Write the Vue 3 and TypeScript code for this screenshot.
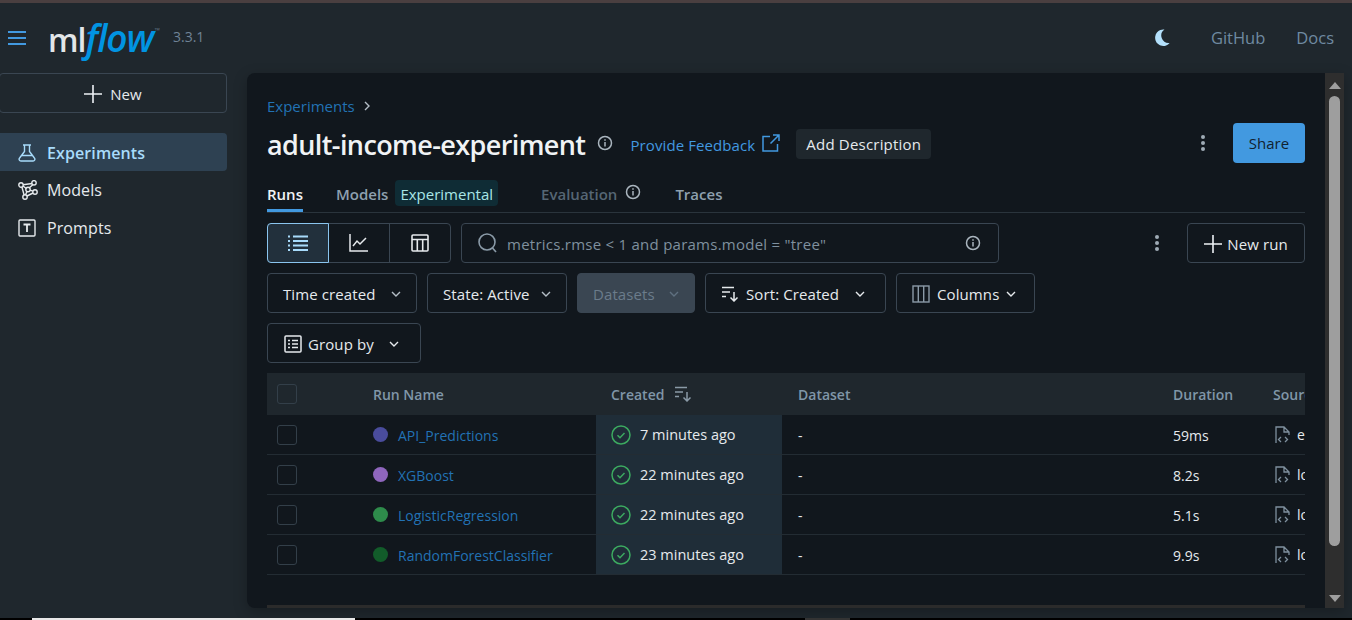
<script setup lang="ts">
interface Run {
  name: string
  color: string
  created: string
  duration: string
  source: string
}

const runs: Run[] = [
  { name: 'API_Predictions', color: '#4a4c9c', created: '7 minutes ago', duration: '59ms', source: 'e' },
  { name: 'XGBoost', color: '#8f66bd', created: '22 minutes ago', duration: '8.2s', source: 'lo' },
  { name: 'LogisticRegression', color: '#2e8b4b', created: '22 minutes ago', duration: '5.1s', source: 'lo' },
  { name: 'RandomForestClassifier', color: '#125c2a', created: '23 minutes ago', duration: '9.9s', source: 'lo' },
]
</script>

<template>
  <div class="page">
    <div class="window-strip"></div>

    <header class="topbar">
      <div class="brand">
        <svg class="burger" width="18" height="14" viewBox="0 0 18 14"><path d="M0 1h18M0 7h18M0 13h18" stroke="#4299e0" stroke-width="2" /></svg>
        <span class="logo"><span class="logo-ml">ml</span><span class="logo-flow">flow</span><span class="logo-tm">™</span></span>
        <span class="version">3.3.1</span>
      </div>
      <div class="top-links">
        <svg width="16" height="17" viewBox="0 0 16 17"><path d="M10.5 .6A8.2 8.2 0 1 0 15.6 14 A7.4 7.4 0 0 1 10.5 .6Z" fill="#b3e0fb" /></svg>
        <span class="top-link github">GitHub</span>
        <span class="top-link">Docs</span>
      </div>
    </header>

    <div class="workspace">
      <aside class="sidebar">
        <button class="new-btn">
          <svg width="18" height="18" viewBox="0 0 18 18"><path d="M9 0v18M0 9h18" stroke="#eef2f5" stroke-width="1.6" /></svg>
          New
        </button>
        <nav class="nav">
          <div class="nav-item active">
            <svg width="18" height="18" viewBox="0 0 18 18" fill="none" stroke="#a8dbfb" stroke-width="1.4"><path d="M5 1h8M6.5 1v6.5L1.6 14a1.8 1.8 0 0 0 1.4 3h12a1.8 1.8 0 0 0 1.4-3l-4.9-6.5V1M4 11.5h10" /></svg>
            <span>Experiments</span>
          </div>
          <div class="nav-item">
            <svg width="20" height="20" viewBox="0 0 20 20" fill="none" stroke="#e6eaed" stroke-width="1.4"><circle cx="3" cy="5" r="2.2" /><circle cx="16" cy="2.8" r="2.2" /><circle cx="10" cy="9.5" r="2.2" /><circle cx="17" cy="12" r="2.2" /><circle cx="7" cy="17" r="2.2" /><path d="M5 6l3.300 2.500M14.100 3.500L5.200 4.700M14.800 4.700L11.300 7.800M12.100 10.200l2.800 1M15 13l-6 3M9 11.500L7.500 14.800M3.900 7l2.200 8" /></svg>
            <span>Models</span>
          </div>
          <div class="nav-item">
            <svg width="18" height="18" viewBox="0 0 18 18" fill="none" stroke="#e6eaed" stroke-width="1.4"><rect x="1" y="1" width="16" height="16" rx="1" /><path d="M5.500 5.500h7M9 5.500v7.500" stroke-width="1.800" /></svg>
            <span>Prompts</span>
          </div>
        </nav>
      </aside>

      <main class="panel">
        <div class="content">
          <div class="crumb">
            <span>Experiments</span>
            <svg width="8" height="10" viewBox="0 0 8 10" fill="none"><path d="M2 1l4 4-4 4" stroke="#b4bec6" stroke-width="1.400" /></svg>
          </div>

          <div class="title-row">
            <h1>adult-income-experiment</h1>
            <svg class="info" width="16" height="16" viewBox="0 0 16 16" fill="none" stroke="#aab5be" stroke-width="1.500"><circle cx="8" cy="8" r="6.500" /><path d="M8 7v4.500M8 4.300v1.500" /></svg>
            <span class="feedback">Provide Feedback</span>
            <svg class="ext" width="18" height="18" viewBox="0 0 18 18" fill="none" stroke="#4299e0" stroke-width="1.500"><path d="M8 2.500H1v14.500h14.500V10M11 1h6v6M17 1L8.500 9.500" /></svg>
            <span class="add-desc">Add Description</span>
            <span class="spacer"></span>
            <svg width="4" height="16" viewBox="0 0 4 16" fill="#9fabb5"><circle cx="2" cy="2" r="2" /><circle cx="2" cy="8" r="2" /><circle cx="2" cy="14" r="2" /></svg>
            <button class="share">Share</button>
          </div>

          <div class="tabs">
            <span class="tab current">Runs</span>
            <span class="tab models-tab">Models<span class="tag">Experimental</span></span>
            <span class="tab disabled">Evaluation
              <svg width="16" height="16" viewBox="0 0 16 16" fill="none" stroke="#aab5be" stroke-width="1.500"><circle cx="8" cy="8" r="6.500" /><path d="M8 7v4.500M8 4.300v1.500" /></svg>
            </span>
            <span class="tab traces">Traces</span>
          </div>

          <div class="toolbar">
            <div class="toggle">
              <div class="seg on">
                <svg width="22" height="16" viewBox="0 0 22 16" stroke="#a8dbfb" stroke-width="2"><path d="M1 1.500h2M6 1.500h15M1 6h2M6 6h15M1 10.500h2M6 10.500h15M1 15h2M6 15h15" /></svg>
              </div>
              <div class="seg">
                <svg width="20" height="18" viewBox="0 0 20 18" fill="none" stroke="#e6eaed" stroke-width="1.500"><path d="M1 0v17h18M4 12l4-5 3 3 6-6" /></svg>
              </div>
              <div class="seg">
                <svg width="18" height="18" viewBox="0 0 18 18" fill="none" stroke="#e6eaed" stroke-width="1.600"><rect x="1" y="1" width="16" height="16" rx="1" /><path d="M1 5.500h16M6.300 5.500V17M11.700 5.500V17" /></svg>
              </div>
            </div>
            <div class="search">
              <svg width="20" height="20" viewBox="0 0 20 20" fill="none" stroke="#8a9aa7" stroke-width="1.600"><circle cx="9" cy="9" r="8" /><path d="M14.500 15l3.500 4" /></svg>
              <span class="placeholder">metrics.rmse &lt; 1 and params.model = "tree"</span>
              <svg width="16" height="16" viewBox="0 0 16 16" fill="none" stroke="#aab5be" stroke-width="1.500"><circle cx="8" cy="8" r="6.500" /><path d="M8 7v4.500M8 4.300v1.500" /></svg>
            </div>
            <span class="spacer"></span>
            <svg width="4" height="16" viewBox="0 0 4 16" fill="#9fabb5"><circle cx="2" cy="2" r="2" /><circle cx="2" cy="8" r="2" /><circle cx="2" cy="14" r="2" /></svg>
            <button class="btn new-run">
              <svg width="18" height="18" viewBox="0 0 18 18"><path d="M9 0v18M0 9h18" stroke="#eef2f5" stroke-width="1.600" /></svg>
              New run
            </button>
          </div>

          <div class="filters">
            <button class="btn f-time">Time created
              <svg class="chev" width="10" height="6" viewBox="0 0 10 6" fill="none"><path d="M1 1l4 4 4-4" stroke="#b4bec6" stroke-width="1.400" /></svg>
            </button>
            <button class="btn f-state">State: Active
              <svg class="chev" width="10" height="6" viewBox="0 0 10 6" fill="none"><path d="M1 1l4 4 4-4" stroke="#b4bec6" stroke-width="1.400" /></svg>
            </button>
            <button class="btn f-data">Datasets
              <svg class="chev" width="10" height="6" viewBox="0 0 10 6" fill="none"><path d="M1 1l4 4 4-4" stroke="#5f7080" stroke-width="1.400" /></svg>
            </button>
            <button class="btn f-sort">
              <svg width="18" height="16" viewBox="0 0 18 16" fill="none" stroke="#e6eaed" stroke-width="1.500"><path d="M1 1.500h12M1 6h8M1 10.500h4M13 6v9M9.500 11.500l3.500 3.500 3.500-3.500" /></svg>
              Sort: Created
              <svg class="chev" width="10" height="6" viewBox="0 0 10 6" fill="none"><path d="M1 1l4 4 4-4" stroke="#e6eaed" stroke-width="1.400" /></svg>
            </button>
            <button class="btn f-cols">
              <svg width="18" height="18" viewBox="0 0 18 18" fill="none" stroke="#8a9aa7" stroke-width="1.400"><rect x="1" y="1" width="16" height="16" /><path d="M6.300 1v16M11.700 1v16" /></svg>
              Columns
              <svg class="chev" width="10" height="6" viewBox="0 0 10 6" fill="none"><path d="M1 1l4 4 4-4" stroke="#e6eaed" stroke-width="1.400" /></svg>
            </button>
            <button class="btn f-group">
              <svg width="18" height="18" viewBox="0 0 18 18" fill="none" stroke="#e6eaed" stroke-width="1.500"><rect x="1" y="1" width="16" height="16" rx="1" /><path d="M4 5.500h2M8 5.500h6M4 9h2M8 9h6M4 12.500h2M8 12.500h6" /></svg>
              Group by
              <svg class="chev" width="10" height="6" viewBox="0 0 10 6" fill="none"><path d="M1 1l4 4 4-4" stroke="#e6eaed" stroke-width="1.400" /></svg>
            </button>
          </div>

          <div class="table">
            <div class="row head">
              <div class="cell check"><span class="box"></span></div>
              <div class="cell">Run Name</div>
              <div class="cell created-head">Created
                <svg width="18" height="16" viewBox="0 0 18 16" fill="none" stroke="#8a9aa7" stroke-width="1.500"><path d="M1 1.500h12M1 6h8M1 10.500h4M13 6v9M9.500 11.500l3.500 3.500 3.500-3.500" /></svg>
              </div>
              <div class="cell">Dataset</div>
              <div class="cell">Duration</div>
              <div class="cell">Source</div>
            </div>
            <div v-for="run in runs" :key="run.name" class="row">
              <div class="cell check"><span class="box"></span></div>
              <div class="cell name">
                <span class="dot" :style="{ background: run.color }"></span>
                {{ run.name }}
              </div>
              <div class="cell created">
                <svg width="20" height="20" viewBox="0 0 20 20" fill="none" stroke="#3caa60" stroke-width="1.500"><circle cx="10" cy="10" r="9" /><path d="M6.500 10.300l2.500 2.400 4.500-4.700" /></svg>
                {{ run.created }}
              </div>
              <div class="cell plain">-</div>
              <div class="cell plain">{{ run.duration }}</div>
              <div class="cell source">
                <svg width="15" height="18" viewBox="0 0 15 18" fill="none" stroke="#7f909e" stroke-width="1.300"><path d="M1 17V1h8l5 5v3M9 1v5h5M6 11l-2.500 2.500L6 16M10 11l2.500 2.500L10 16" /></svg>
                <span>{{ run.source }}</span>
              </div>
            </div>
          </div>

          <span class="spacer"></span>
          <div class="hscroll"></div>
        </div>

        <div class="scrollbar">
          <svg width="12" height="7" viewBox="0 0 12 7"><path d="M6 0l6 7H0z" fill="#9e9e9e" /></svg>
          <div class="thumb"></div>
          <span class="spacer"></span>
          <svg width="12" height="7" viewBox="0 0 12 7"><path d="M0 0h12L6 7z" fill="#9e9e9e" /></svg>
        </div>
      </main>
    </div>

    <div class="taskbar">
      <span class="tb-white"></span>
      <span class="tb-gray"></span>
    </div>
  </div>
</template>

<style>
html,
body {
  margin: 0;
  background: #000;
  overflow: hidden;
}
</style>

<style scoped>
.page {
  width: 1352px;
  height: 620px;
  display: flex;
  flex-direction: column;
  background: #1f272d;
  font-family: "Open Sans", "Noto Sans", sans-serif;
  font-size: 14px;
  color: #e6eaed;
  overflow: hidden;
}

.window-strip {
  height: 3px;
  background: #4a3f40;
  flex: none;
}

.topbar {
  height: 70px;
  flex: none;
  display: flex;
  align-items: center;
  justify-content: space-between;
  padding: 0 18px 0 8px;
  box-sizing: border-box;
}

.brand {
  display: flex;
  align-items: center;
}

.burger {
  margin-right: 24px;
}

.logo {
  width: 123px;
  display: flex;
  align-items: baseline;
  line-height: 40px;
  margin: 2px 0 0 -2px;
  padding-right: 2px;
}

.logo-ml {
  font-size: 32px;
  font-weight: 600;
  color: #e2e6e8;
  letter-spacing: -1px;
}

.logo-flow {
  font-style: italic;
  font-size: 37px;
  font-weight: 600;
  color: #0194e2;
  letter-spacing: -1px;
}

.logo-tm {
  font-size: 7px;
  color: #5f7080;
  align-self: flex-start;
  margin: 8px 0 0 1px;
  line-height: 10px;
}

.version {
  color: #6f8396;
  margin-top: -4px;
}

.top-links {
  display: flex;
  align-items: center;
  margin-top: -1px;
}

.top-link {
  font-size: 16.500px;
  color: #6f8aa1;
}

.github {
  margin: 0 31px 0 41px;
}

.workspace {
  flex: 1;
  min-height: 0;
  display: flex;
  padding-bottom: 10px;
}

.sidebar {
  width: 247px;
  flex: none;
  overflow: hidden;
}

.new-btn {
  width: 228px;
  height: 40px;
  margin-left: -1px;
  display: flex;
  align-items: center;
  justify-content: center;
  gap: 8px;
  padding: 1px 0 0;
  background: transparent;
  border: 1px solid #3a4652;
  border-radius: 4px;
  color: #e6eaed;
  font: inherit;
  font-size: 15px;
}

.nav {
  margin-top: 20px;
  width: 227px;
  display: flex;
  flex-direction: column;
}

.nav-item {
  height: 38px;
  display: flex;
  align-items: center;
  gap: 10px;
  padding-left: 18px;
  padding-top: 1px;
  box-sizing: border-box;
  font-size: 16px;
  letter-spacing: 0.1px;
  border-radius: 0 4px 4px 0;
}

.nav-item:nth-child(2) {
  height: 37px;
  gap: 9px;
}

.nav-item:nth-child(3) {
  height: 37px;
  padding-top: 3px;
}

.nav-item.active {
  background: #2e4152;
  color: #a8dbfb;
  font-weight: 600;
}

.nav-item.active svg,
.nav-item:nth-child(3) svg {
  margin-right: 1px;
}

.panel {
  width: 1097px;
  flex: none;
  display: flex;
  background: #11171d;
  border-radius: 8px 0 0 8px;
  box-shadow: 0 4px 14px rgba(0, 0, 0, 0.25);
  overflow: hidden;
}

.content {
  width: 1038px;
  margin-left: 20px;
  margin-right: 20px;
  display: flex;
  flex-direction: column;
  overflow: hidden;
}

.spacer {
  flex: 1;
}

.crumb {
  margin-top: 23px;
  height: 20px;
  display: flex;
  align-items: center;
  gap: 8px;
  color: #2272b4;
  font-size: 15px;
}

.title-row {
  height: 40px;
  margin-top: 7px;
  display: flex;
  align-items: center;
}

h1 {
  margin: 0;
  padding-top: 2px;
  font-size: 27px;
  font-weight: 600;
  letter-spacing: -0.6px;
  color: #f0f3f5;
}

.info {
  margin: 0 0 0 12px;
}

.feedback {
  margin-left: 17px;
  padding-top: 4px;
  color: #4299e0;
  font-size: 15px;
  letter-spacing: 0.1px;
}

.ext {
  margin: -1px 0 0 7px;
}

.add-desc {
  margin: 2px 0 0 16px;
  height: 30px;
  line-height: 30px;
  padding: 0 10px;
  background: #1f272d;
  border-radius: 4px;
  font-size: 15px;
  letter-spacing: 0.2px;
}

.share {
  width: 72px;
  height: 40px;
  margin-left: 28px;
  background: #4299e0;
  border: 0;
  border-radius: 4px;
  color: #11222f;
  font: inherit;
  font-size: 15px;
}

.tabs {
  height: 50px;
  display: flex;
  align-items: flex-end;
  border-bottom: 1px solid #2a343c;
  box-sizing: border-box;
}

.tab {
  height: 48px;
  box-sizing: border-box;
  padding-top: 12px;
  display: flex;
  align-items: center;
  font-weight: 600;
  color: #8ea0af;
  font-size: 15px;
}

.tab.current {
  color: #f0f3f5;
  border-bottom: 3px solid #4299e0;
  padding-top: 15px;
  margin-right: 33px;
}

.tag {
  margin: 0 0 2px 7px;
  height: 26px;
  line-height: 28px;
  padding: 0 5px;
  background: #0f2c35;
  color: #a9e6e6;
  font-weight: 400;
  border-radius: 4px;
}

.tab.disabled {
  margin-left: 43px;
  color: #566674;
  gap: 8px;
}

.tab.disabled svg {
  margin-bottom: 4px;
}

.tab.traces {
  margin-left: 34px;
}

.toolbar {
  margin-top: 10px;
  height: 40px;
  flex: none;
  display: flex;
  align-items: center;
}

.toggle {
  width: 184px;
  height: 40px;
  display: flex;
  border: 1px solid #3a4652;
  border-radius: 4px;
  box-sizing: border-box;
}

.seg {
  flex: 1;
  display: flex;
  align-items: center;
  justify-content: center;
  margin: -1px 0;
}

.seg + .seg {
  border-left: 1px solid #3a4652;
}

.seg.on {
  flex: none;
  width: 62px;
  margin: -1px 0 -1px -1px;
  background: #22303c;
  border: 1px solid #8ac5ef;
  border-radius: 4px 0 0 4px;
  box-sizing: border-box;
}

.seg.on + .seg {
  border-left: 0;
}

.search {
  width: 538px;
  height: 40px;
  margin-left: 10px;
  box-sizing: border-box;
  display: flex;
  align-items: center;
  padding: 0 17px 0 16px;
  border: 1px solid #3a4652;
  border-radius: 4px;
}

.placeholder {
  flex: 1;
  margin-left: 9px;
  padding-top: 2px;
  color: #7f909e;
  font-size: 15px;
  letter-spacing: 0.25px;
}

.btn {
  height: 40px;
  display: flex;
  align-items: center;
  background: transparent;
  border: 1px solid #3a4652;
  border-radius: 4px;
  box-sizing: border-box;
  color: #e6eaed;
  font: inherit;
  font-size: 15px;
  letter-spacing: 0.1px;
  padding: 1px 0 0;
}

.new-run {
  width: 118px;
  margin-left: 28px;
  justify-content: center;
  gap: 5px;
}

.filters {
  margin-top: 10px;
  max-width: 800px;
  display: flex;
  flex-wrap: wrap;
  gap: 10px;
  flex: none;
}

.f-time {
  width: 150px;
  padding-left: 15px;
}

.f-state {
  width: 140px;
  padding-left: 15px;
}

.f-data {
  width: 118px;
  padding-left: 15px;
  background: #3a4652;
  color: #6b7c8b;
}

.f-sort {
  width: 181px;
  padding-left: 15px;
  gap: 7px;
}

.f-sort .chev {
  margin-right: 20px;
}

.f-cols {
  width: 139px;
  padding-left: 15px;
  gap: 7px;
}

.f-group {
  width: 154px;
  padding-left: 16px;
  gap: 6px;
}

.f-group .chev {
  margin-right: 21px;
}

.chev {
  margin-left: auto;
  margin-right: 15px;
}

.f-cols .chev {
  margin-left: 0;
}

.table {
  margin-top: 10px;
  flex: none;
}

.row {
  display: grid;
  grid-template-columns: 90px 239px 186px 375px 100px 100px;
  width: 1090px;
  height: 39px;
  border-bottom: 1px solid #232c33;
}

.row.head {
  height: 42px;
  background: #1f272d;
  border: 0;
  width: 1038px;
  font-weight: 600;
  color: #8096a8;
  overflow: hidden;
}

.cell {
  display: flex;
  align-items: center;
  padding-left: 16px;
  white-space: nowrap;
}

.plain {
  padding-top: 1px;
}

.check {
  padding-left: 10px;
}

.box {
  width: 20px;
  height: 20px;
  box-sizing: border-box;
  border: 1.500px solid #333f49;
  border-radius: 3px;
}

.created-head {
  padding-left: 15px;
  gap: 10px;
}

.name {
  color: #2272b4;
  gap: 10px;
  padding-top: 1px;
}

.dot {
  width: 15px;
  height: 15px;
  border-radius: 50%;
  margin-top: -1px;
}

.created {
  background: #1f2d38;
  color: #e6eaed;
  gap: 9px;
  padding-left: 15px;
  font-size: 14.500px;
}

.source {
  padding-left: 18px;
  gap: 7px;
  color: #e6eaed;
}

.hscroll {
  height: 3px;
  flex: none;
  background: #2b2b2b;
}

.scrollbar {
  width: 19px;
  flex: none;
  background: #2e2e2e;
  display: flex;
  flex-direction: column;
  align-items: center;
  padding: 9px 0 6px;
  box-sizing: border-box;
}

.thumb {
  width: 11px;
  height: 450px;
  margin-top: 7px;
  background: #9e9e9e;
  border-radius: 6px;
}

.taskbar {
  height: 2px;
  flex: none;
  background: #000;
  display: flex;
}

.tb-white {
  margin-left: 32px;
  width: 323px;
  height: 2px;
  background: #e8e8e8;
}

.tb-gray {
  margin-left: 450px;
  width: 45px;
  height: 2px;
  background: #333;
}
</style>
